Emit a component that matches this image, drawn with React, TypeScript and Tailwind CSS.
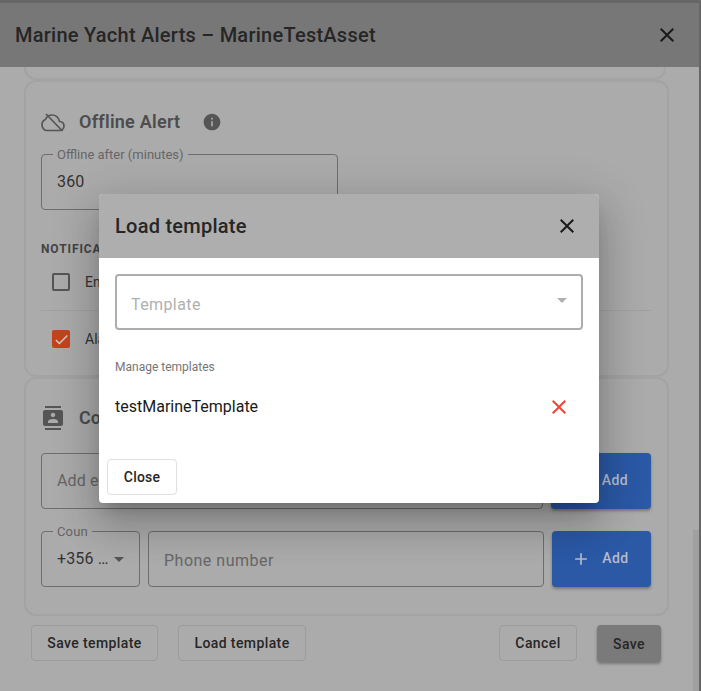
import {
  MdAdd,
  MdArrowDropDown,
  MdCheck,
  MdClose,
  MdContacts,
  MdInfo,
} from "react-icons/md";

function CloudOffIcon() {
  return (
    <svg width="24" height="19" viewBox="0 0 24 19" fill="none" stroke="#555555" strokeWidth="1.7" className="shrink-0">
      <path d="M5.5 17.5h13c2.5 0 4.5-2 4.5-4.5 0-2.4-1.900-4.300-4.400-4.500C17.500 4.500 14.500 2 11 2 8 2 5.700 3.500 4.400 6.500 2.300 7.300 1 9.300 1 11.700c0 3.200 2 5.800 4.500 5.800z" />
      <path d="M5 1l16.500 17" />
    </svg>
  );
}

function AddButton({ className }: { className: string }) {
  return (
    <button
      className={`flex h-14 items-center justify-center gap-[11px] rounded bg-[#2b59a6] pr-[3px] text-sm font-medium tracking-[0.4px] text-[#b5bccb] shadow-[0_2px_3px_rgba(0,0,0,0.3)] ${className}`}
    >
      <MdAdd className="text-[20px]" />
      <span className="mb-[2px]">Add</span>
    </button>
  );
}

function FooterButton({ label, className = "" }: { label: string; className?: string }) {
  return (
    <button
      className={`h-9 rounded border border-[#9b9b9b] text-sm font-medium tracking-[0.4px] text-[#262626] ${className}`}
    >
      {label}
    </button>
  );
}

function LoadTemplateModal() {
  return (
    <div className="absolute left-[99px] top-[194px] flex h-[309px] w-[500px] flex-col overflow-hidden rounded bg-white shadow-[0_11px_15px_-7px_rgba(0,0,0,0.2),0_24px_38px_3px_rgba(0,0,0,0.14),0_9px_46px_8px_rgba(0,0,0,0.12)]">
      <div className="flex h-16 shrink-0 items-center justify-between bg-[#aeaeae] pl-4 pr-[20px]">
        <span className="text-xl font-medium tracking-[0.25px] text-[#262626]">Load template</span>
        <MdClose className="text-2xl text-[#1a1a1a]" />
      </div>
      <div className="flex flex-1 flex-col px-4 pt-4">
        <div className="flex h-14 items-center justify-between rounded border-2 border-[#adadad] pl-[14px] pr-[7px]">
          <span className="pt-[5px] text-base tracking-[0.4px] text-[#b0b0b0]">Template</span>
          <MdArrowDropDown className="mb-1 text-2xl text-[#b0b0b0]" />
        </div>
        <span className="mt-[30px] text-xs leading-[15px] text-[#757575]">Manage templates</span>
        <div className="mt-[20px] flex items-center justify-between pr-3">
          <span className="text-base leading-[24px] text-[#1a1a1a]">testMarineTemplate</span>
          <MdClose className="text-2xl text-[#f44336]" />
        </div>
      </div>
      <div className="px-2 pb-2">
        <button className="h-9 w-[70px] rounded border border-[#e0e0e0] text-sm font-medium tracking-[0.2px] text-[#262626]">
          Close
        </button>
      </div>
    </div>
  );
}

export default function App() {
  return (
    <div className="relative h-[691px] w-[701px] overflow-hidden bg-[#666666] font-['Roboto',sans-serif]">
      <div className="flex h-[691px] w-[699px] translate-y-[3px] flex-col rounded-t bg-[#ababab]">
        {/* title bar */}
        <div className="flex h-16 shrink-0 items-center justify-between bg-[#777777] pl-[15px] pr-5">
          <span className="text-xl font-medium tracking-[0.25px] text-[#262626]">
            Marine Yacht Alerts – MarineTestAsset
          </span>
          <MdClose className="text-2xl text-[#1a1a1a]" />
        </div>

        {/* scrolling body */}
        <div className="flex h-[556px] shrink-0 flex-col overflow-hidden px-6">
          <div className="mt-[-7px] h-5 w-[642px] shrink-0 rounded-b-xl border-2 border-[#a3a3a3]" />
          <div className="flex h-[297px] w-[645px] shrink-0 flex-col rounded-xl border-2 border-[#a3a3a3] px-[15px] pt-[28px]">
            <div className="flex h-6 items-center">
              <CloudOffIcon />
              <span className="ml-[14px] text-lg font-semibold tracking-[0.25px] text-[#4d4d4d]">Offline Alert</span>
              <MdInfo className="ml-[22px] text-[20px] text-[#555555]" />
            </div>
            <div className="relative mt-[20px] flex h-14 w-[297px] items-center rounded border border-[#6e6e6e] pl-[15px]">
              <span className="absolute -top-[7px] left-[11px] bg-[#ababab] px-1 text-[13px] leading-[14px] text-[#666666]">
                Offline after (minutes)
              </span>
              <span className="text-base tracking-[0.15px] text-[#333333]">360</span>
            </div>
            <span className="mt-[32px] text-xs font-bold leading-[15px] tracking-[0.9px] text-[#444444]">
              NOTIFICATIONS
            </span>
            <div className="flex h-[54px] w-[610px] items-center border-b border-[#a0a0a0] pb-[3px] pl-[11px]">
              <span className="h-[18px] w-[18px] rounded-[2px] border-2 border-[#555555]" />
              <span className="ml-[15px] text-sm text-[#333333]">Email</span>
            </div>
            <div className="flex h-[56px] items-center pl-[11px]">
              <span className="flex h-[18px] w-[18px] items-center justify-center rounded-[2px] bg-[#c3441c]">
                <MdCheck className="text-[17px] text-[#d0d0d0]" />
              </span>
              <span className="ml-[15px] text-sm text-[#333333]">Alarm</span>
            </div>
          </div>
          <div className="flex h-[239px] w-[645px] shrink-0 flex-col rounded-xl border-2 border-[#a3a3a3] px-[15px] pt-[25px]">
            <div className="flex h-7 items-center">
              <MdContacts className="text-2xl text-[#555555]" />
              <span className="ml-[14px] text-lg font-semibold text-[#4d4d4d]">Contacts</span>
            </div>
            <div className="mt-[21px] flex gap-2">
              <div className="flex h-14 w-[502px] items-center rounded border border-[#6e6e6e] pl-[15px] text-base tracking-[0.15px] text-[#666666]">
                Add email
              </div>
              <AddButton className="w-[100px]" />
            </div>
            <div className="mt-[22px] flex gap-2">
              <div className="relative flex h-14 w-[99px] items-center rounded border border-[#6e6e6e] pl-[15px] text-base tracking-[0.15px] text-[#333333]">
                <span className="absolute -top-[7px] left-[11px] bg-[#ababab] px-1 text-[13px] leading-[14px] text-[#666666]">
                  <span className="block w-[31px] overflow-hidden whitespace-nowrap">Country</span>
                </span>
                +356 …
                <MdArrowDropDown className="absolute right-[8px] text-2xl text-[#555555]" />
              </div>
              <div className="flex h-14 w-[396px] items-center rounded border border-[#6e6e6e] pl-[15px] pt-1 text-base tracking-[0.5px] text-[#666666]">
                Phone number
              </div>
              <AddButton className="w-[99px]" />
            </div>
          </div>
        </div>

        {/* footer actions */}
        <div className="flex pl-[31px] pr-[38px] pt-[2px]">
          <FooterButton label="Save template" className="w-[127px]" />
          <FooterButton label="Load template" className="ml-5 w-[128px]" />
          <FooterButton label="Cancel" className="ml-auto w-[78px]" />
          <button className="ml-5 h-[37px] w-16 rounded bg-[#7a7a7a] text-sm font-medium tracking-[0.4px] text-[#262626] shadow-[0_2px_3px_rgba(0,0,0,0.3)]">
            Save
          </button>
        </div>
      </div>

      {/* scrollbar thumb */}
      <div className="absolute bottom-0 left-[693px] h-[161px] w-1.5 bg-[#a0a0a0]" />

      <LoadTemplateModal />
    </div>
  );
}
